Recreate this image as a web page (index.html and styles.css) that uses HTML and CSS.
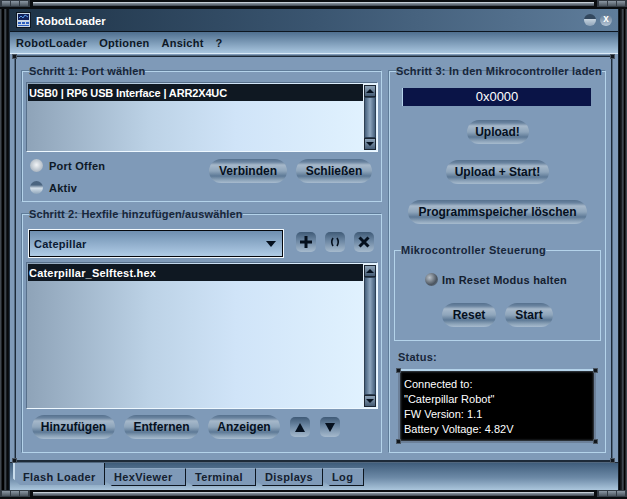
FILE: index.html
```html
<!DOCTYPE html>
<html lang="de">
<head>
    <meta charset="UTF-8">
    <meta name="viewport" content="width=device-width, initial-scale=1.0">
    <title>RobotLoader</title>
    <link rel="stylesheet" href="styles.css">
</head>
<body>
    <div class="window">
        <div class="edge">
            <div class="grip"><i></i><i></i><i></i></div>
            <div class="edge-line"></div>
            <div class="grip"><i></i><i></i><i></i></div>
        </div>
        <div class="middle">
            <div class="side"></div>
            <div class="app">
                <div class="titlebar">
                    <svg class="app-icon" width="15" height="16" viewBox="0 0 15 16">
                        <rect x="0.5" y="0.5" width="14" height="15" fill="#c6d6e6" stroke="#0d1620"/>
                        <rect x="2" y="2" width="11" height="6" fill="#10205a"/>
                        <path d="M3 6l2-2 2 2 2-3 3 2" fill="none" stroke="#5a9be8"/>
                        <rect x="2" y="10" width="3" height="2" fill="#2c5fc0"/>
                        <rect x="6" y="10" width="3" height="2" fill="#2c5fc0"/>
                        <rect x="10" y="10" width="3" height="2" fill="#2c5fc0"/>
                        <rect x="2" y="13" width="11" height="1" fill="#2c5fc0"/>
                    </svg>
                    <span class="app-title">RobotLoader</span>
                    <span class="win-btn win-min"></span>
                    <span class="win-btn">x</span>
                </div>
                <div class="menubar">
                    <span>RobotLoader</span>
                    <span>Optionen</span>
                    <span>Ansicht</span>
                    <span>?</span>
                </div>
                <div class="panel">
                    <span class="handle handle-tl"></span>
                    <span class="handle handle-tr"></span>
                    <span class="handle handle-bl"></span>
                    <span class="handle handle-br"></span>
                    <div class="left-col">
                        <fieldset class="group step1">
                            <legend>Schritt 1: Port wählen</legend>
                            <div class="list list-short">
                                <div class="list-body">
                                    <div class="list-row row-tight">USB0 | RP6 USB Interface | ARR2X4UC</div>
                                </div>
                                <div class="scrollbar">
                                    <span class="scroll-btn"><i class="tri-up"></i></span>
                                    <span class="scroll-track"></span>
                                    <span class="scroll-btn"><i class="tri-down"></i></span>
                                </div>
                            </div>
                            <div class="port-row">
                                <div class="leds">
                                    <div class="led-line"><span class="led led-off"></span>Port Offen</div>
                                    <div class="led-line"><span class="led led-on"></span>Aktiv</div>
                                </div>
                                <div class="btn-row">
                                    <button class="pill w78">Verbinden</button>
                                    <button class="pill w76">Schließen</button>
                                </div>
                            </div>
                        </fieldset>
                        <fieldset class="group step2">
                            <legend>Schritt 2: Hexfile hinzufügen/auswählen</legend>
                            <div class="combo-row">
                                <div class="combo">
                                    <span>Catepillar</span>
                                    <i class="combo-arrow"></i>
                                </div>
                                <div class="icon-btns">
                                    <button class="square">
                                        <svg width="14" height="14" viewBox="0 0 14 14"><path d="M7 1v12M1 7h12" stroke="#05101e" stroke-width="3" fill="none"/></svg>
                                    </button>
                                    <button class="square">
                                        <svg width="14" height="14" viewBox="0 0 14 14"><path d="M5 3Q2.500 7 5 11M9 3Q11.500 7 9 11" stroke="#05101e" stroke-width="1.600" fill="none"/></svg>
                                    </button>
                                    <button class="square">
                                        <svg width="14" height="14" viewBox="0 0 14 14"><path d="M2.500 2.500l9 9M11.500 2.500l-9 9" stroke="#05101e" stroke-width="3" fill="none"/></svg>
                                    </button>
                                </div>
                            </div>
                            <div class="list list-tall">
                                <div class="list-body">
                                    <div class="list-row">Caterpillar_Selftest.hex</div>
                                </div>
                                <div class="scrollbar">
                                    <span class="scroll-btn"><i class="tri-up"></i></span>
                                    <span class="scroll-track"></span>
                                    <span class="scroll-btn"><i class="tri-down"></i></span>
                                </div>
                            </div>
                            <div class="hex-btns">
                                <button class="pill w83">Hinzufügen</button>
                                <button class="pill w75">Entfernen</button>
                                <button class="pill w72">Anzeigen</button>
                                <div class="arrow-btns">
                                    <button class="square"><i class="arrow-up"></i></button>
                                    <button class="square"><i class="arrow-down"></i></button>
                                </div>
                            </div>
                        </fieldset>
                    </div>
                    <fieldset class="group step3">
                        <legend>Schritt 3: In den Mikrocontroller laden</legend>
                        <div class="progress">0x0000</div>
                        <div class="upload-btns">
                            <button class="pill w62">Upload!</button>
                            <button class="pill w103">Upload + Start!</button>
                            <button class="pill w179">Programmspeicher löschen</button>
                        </div>
                        <fieldset class="group control">
                            <legend>Mikrocontroller Steuerung</legend>
                            <div class="led-line reset-led"><span class="led led-dark"></span>Im Reset Modus halten</div>
                            <div class="btn-row center">
                                <button class="pill w54">Reset</button>
                                <button class="pill w48">Start</button>
                            </div>
                        </fieldset>
                        <div class="status-label">Status:</div>
                        <div class="status">
                            <span class="handle handle-tl"></span>
                            <span class="handle handle-tr"></span>
                            <span class="handle handle-bl"></span>
                            <span class="handle handle-br"></span>
                            <div>Connected to:</div>
                            <div>"Caterpillar Robot"</div>
                            <div>FW Version: 1.1</div>
                            <div>Battery Voltage: 4.82V</div>
                        </div>
                    </fieldset>
                </div>
                <div class="tabstrip">
                    <span class="tab active">Flash Loader</span>
                    <span class="tab t-hex">HexViewer</span>
                    <span class="tab t-term">Terminal</span>
                    <span class="tab t-disp">Displays</span>
                    <span class="tab t-log">Log</span>
                </div>
            </div>
            <div class="side"></div>
        </div>
        <div class="edge">
            <div class="grip"><i></i><i></i><i></i></div>
            <div class="edge-line"></div>
            <div class="grip"><i></i><i></i><i></i></div>
        </div>
    </div>
</body>
</html>
```
FILE: styles.css
```css
* {
    box-sizing: border-box;
}
body {
    margin: 0;
    background-color: #000;
    font-family: "Liberation Sans", Arial, sans-serif;
    font-size: 11px;
    font-weight: bold;
    color: #0d1826;
}
.window {
    width: 627px;
    height: 499px;
    display: flex;
    flex-direction: column;
    background-color: #050709;
    overflow: hidden;
}

/* outer frame */
.edge {
    height: 9px;
    display: flex;
    align-items: flex-start;
    background-color: #0a0d10;
}
.grip {
    width: 30px;
    height: 7px;
    display: flex;
    gap: 1px;
    padding: 1px 2px;
    background-color: #333b44;
    flex: none;
}
.grip i {
    flex: 1;
    background: linear-gradient(#8b97a3, #4a545e);
}
.edge-line {
    flex: 1;
    height: 4px;
    margin: 2px 3px 0;
    background: linear-gradient(#8e9aa6, #3c444d);
    border-top: 1px solid #c5ced6;
}
.middle {
    flex: 1;
    display: flex;
    min-height: 0;
}
.side {
    width: 10px;
    flex: none;
    background: linear-gradient(90deg, #40474f 0, #40474f 1px, #000 2px, #000 4px, #5a6570 5px, #20262c 6px, #000 8px, #2b3d50 10px);
}
.side:last-child {
    width: 9px;
    background: linear-gradient(270deg, #40474f 0, #40474f 1px, #000 2px, #000 3px, #5a6570 4px, #20262c 5px, #000 8px, #2b3d50 9px);
}
.app {
    flex: 1;
    display: flex;
    flex-direction: column;
    min-width: 0;
    background-color: #7f9ab8;
}

/* title and menu */
.titlebar {
    height: 23px;
    display: flex;
    align-items: center;
    padding: 0 6px 0 6px;
    gap: 4px;
    background: linear-gradient(90deg, #1e3347, #3a5570 50%, #5f7d9b);
    border-bottom: 1px solid #0d1620;
    flex: none;
}
.app-title {
    color: #fff;
    font-size: 11.200px;
    flex: 1;
    margin-left: 1px;
    padding-top: 2px;
}
.win-btn {
    width: 12px;
    height: 12px;
    border-radius: 50%;
    background: linear-gradient(#5d7690, #b6c6d6);
    color: #fff;
    font-size: 10px;
    line-height: 10px;
    text-align: center;
}
.win-min {
    background: linear-gradient(#33485e 40%, #c2d0dc 45%, #8ea3b8);
}
.menubar {
    height: 22px;
    display: flex;
    align-items: center;
    gap: 12px;
    padding: 0 6px;
    letter-spacing: 0.250px;
    background: linear-gradient(#4f6f8f, #a9c6df);
    border-bottom: 1px solid #dcecf8;
    flex: none;
}

/* main panel */
.panel {
    position: relative;
    height: 406px;
    margin: 2px 6px 0 5px;
    display: flex;
    gap: 7px;
    padding: 8px 6px 0 6px;
    border: 1px solid #1d2a38;
    border-bottom-width: 2px;
    background-color: #7f9ab8;
    box-shadow: 0 0 0 1px #52687f;
    flex: none;
}
.handle {
    position: absolute;
    width: 5px;
    height: 5px;
    background-color: #11161c;
    border: 1px solid #4a5561;
}
.handle-tl {
    left: -4px;
    top: -3px;
}
.handle-tr {
    right: -4px;
    top: -3px;
}
.handle-bl {
    left: -4px;
    bottom: -3px;
}
.handle-br {
    right: -4px;
    bottom: -3px;
}
.left-col {
    width: 360px;
    display: flex;
    flex-direction: column;
    gap: 6px;
    flex: none;
}
.group {
    margin: 0;
    padding: 4px 3px 0;
    min-width: 0;
    border: 1px solid #b4d3ea;
    box-shadow: -1px -1px 0 #5f7c99;
}
.group legend {
    padding: 0;
    margin-left: 3px;
    font-size: 11px;
    line-height: 13px;
    letter-spacing: 0.150px;
    white-space: nowrap;
    color: #17263a;
}
.step1 {
    height: 137px;
}
.step2 {
    height: 245px;
    padding-top: 9px;
}
.step3 {
    width: 217px;
    height: 388px;
    padding: 8px 4px 0;
    flex: none;
}
.step3 > legend {
    margin-left: 2px;
    letter-spacing: 0.200px;
}

/* lists */
.list {
    display: flex;
    padding: 1px;
    border: 1px solid #57708b;
    border-bottom-color: #eef8ff;
    border-right-color: #eef8ff;
    background: linear-gradient(90deg, #8ea3b8, #bcd2e6 35%, #d0e4f8 60%, #e2f3ff);
}
.list-short {
    height: 70px;
}
.list-tall {
    height: 147px;
    margin-top: 5px;
}
.list-body {
    flex: 1;
    min-width: 0;
}
.list-row {
    height: 17px;
    line-height: 18px;
    padding-left: 1px;
    color: #fff;
    background-color: #0f1822;
    letter-spacing: 0.200px;
}
.row-tight {
    letter-spacing: -0.150px;
}
.scrollbar {
    width: 13px;
    display: flex;
    flex-direction: column;
    padding: 1px 0 0 1px;
    flex: none;
    background-color: #e5f1fa;
}
.scroll-btn {
    height: 12px;
    display: flex;
    align-items: center;
    justify-content: center;
    background: linear-gradient(#8da2b6, #455c75);
    border: 1px solid #1a2430;
    flex: none;
}
.scroll-track {
    flex: 1;
    background: linear-gradient(90deg, #46607c, #8ea6be 50%, #46607c);
    border: 1px solid #2e4155;
}
.tri-up {
    border: 3px solid transparent;
    border-top: 0;
    border-left-width: 4px;
    border-right-width: 4px;
    border-bottom: 4px solid #05101e;
}
.tri-down {
    border: 3px solid transparent;
    border-bottom: 0;
    border-left-width: 4px;
    border-right-width: 4px;
    border-top: 4px solid #05101e;
}

/* port row */
.port-row {
    display: flex;
    justify-content: space-between;
    padding-top: 6px;
}
.leds {
    padding: 1px 0 0 4px;
    display: flex;
    flex-direction: column;
    gap: 9px;
}
.led-line {
    display: flex;
    align-items: center;
    gap: 6px;
    height: 13px;
    letter-spacing: 0.250px;
}
.led {
    width: 13px;
    height: 13px;
    border-radius: 50%;
    flex: none;
}
.led-off {
    background: radial-gradient(circle at 50% 45%, #f2f4f6, #aeb9c4 70%, #8598ab);
}
.led-on {
    background: linear-gradient(#4a6480 30%, #d4e0ea 55%, #8ea5ba);
}
.led-dark {
    background: radial-gradient(circle at 35% 35%, #b8c0c8, #4b5560 60%, #6d8095);
}
.btn-row {
    display: flex;
    gap: 9px;
    padding: 1px 6px 0 0;
}

/* buttons */
.pill {
    height: 24px;
    padding: 0;
    border: 0;
    border-radius: 12px;
    font-family: inherit;
    font-size: 12px;
    font-weight: bold;
    color: #05101e;
    background: linear-gradient(#56718e 0, #6a84a0 3px, #a6b8ca 6px, #8ea5bb 12px, #5d7996 17px, #8ca3b9 21px, #a8bccf 24px);
    flex: none;
}
.w48 { width: 48px; }
.w54 { width: 54px; }
.w62 { width: 62px; }
.w72 { width: 72px; }
.w75 { width: 75px; }
.w76 { width: 76px; }
.w78 { width: 78px; }
.w83 { width: 83px; }
.w103 { width: 103px; }
.w179 { width: 179px; }
.square {
    width: 20px;
    height: 20px;
    padding: 0;
    border: 0;
    border-radius: 5px;
    display: flex;
    align-items: center;
    justify-content: center;
    background: linear-gradient(#3f5a76, #6d88a4 45%, #a6bacd);
    flex: none;
}

/* step 2 */
.combo-row {
    display: flex;
    align-items: flex-start;
    padding-left: 3px;
}
.combo {
    width: 254px;
    height: 27px;
    display: flex;
    align-items: center;
    justify-content: space-between;
    padding: 0 6px 0 4px;
    background: linear-gradient(#6f8fb0, #b0cce6);
    border: 1px solid #04070c;
    outline: 1px solid #f2f8fc;
    color: #0b1a33;
    letter-spacing: 0.250px;
}
.combo-arrow {
    border: 5px solid transparent;
    border-bottom: 0;
    border-top: 6px solid #05101e;
}
.icon-btns {
    display: flex;
    gap: 9px;
    padding: 2px 0 0 13px;
}
.hex-btns {
    display: flex;
    align-items: flex-start;
    gap: 9px;
    padding: 6px 0 0 6px;
}
.arrow-btns {
    display: flex;
    gap: 10px;
    padding: 2px 0 0 1px;
}
.arrow-up {
    border: 5px solid transparent;
    border-top: 0;
    border-bottom: 9px solid #05101e;
}
.arrow-down {
    border: 5px solid transparent;
    border-bottom: 0;
    border-top: 9px solid #05101e;
}

/* step 3 */
.progress {
    width: 189px;
    height: 18px;
    margin: 2px 0 0 8px;
    background-color: #0a1447;
    border-left: 1px solid #b4d3ea;
    color: #fff;
    font-weight: normal;
    font-size: 13px;
    line-height: 18px;
    text-align: center;
}
.upload-btns {
    display: flex;
    flex-direction: column;
    align-items: center;
    gap: 16px;
    padding-top: 14px;
}
.control {
    height: 97px;
    margin-top: 20px;
    padding: 16px 0 0;
    box-shadow: none;
}
.control legend {
    margin-left: 6px;
    letter-spacing: 0.300px;
}
.reset-led {
    padding-left: 30px;
    gap: 4px;
    color: #14202f;
}
.center {
    justify-content: center;
    padding: 17px 0 0;
}
.status-label {
    padding: 10px 0 0 4px;
    color: #17263a;
    letter-spacing: 0.250px;
    line-height: 13px;
}
.status {
    position: relative;
    width: 198px;
    height: 74px;
    margin: 5px 0 0 4px;
    padding: 6px 4px;
    background-color: #000;
    border: 2px solid #6c8099;
    border-top-color: #b4d3ea;
    box-shadow: inset 0 0 2px 1px #3a4048;
    color: #fff;
    font-weight: normal;
    font-size: 11px;
    line-height: 15px;
}

/* tabs */
.tabstrip {
    height: 28px;
    padding: 5px 0 0 3px;
    display: flex;
    align-items: flex-start;
    background: linear-gradient(#3f5d7b, #6d8aa7 55%, #abc6dc);
    border-top: 1px solid #1d2a38;
    flex: none;
}
.tab {
    height: 18px;
    line-height: 17px;
    padding-left: 9px;
    background-color: #7f9ab8;
    border: 1px solid #0d1620;
    border-left: 0;
    border-top-color: #8fa9c4;
    letter-spacing: 0.350px;
    color: #14202f;
    clip-path: polygon(0 0, 100% 0, 100% 100%, 7px 100%, 0 70%);
}
.tab.active {
    width: 92px;
    height: 22px;
    padding-left: 8px;
    margin-top: -5px;
    line-height: 28px;
    border-bottom: 0;
    border-top: 0;
    border-left: 2px solid #c8dcec;
}
.t-hex { width: 81px; }
.t-term { width: 70px; }
.t-disp { width: 67px; }
.t-log { width: 41px; }
```
